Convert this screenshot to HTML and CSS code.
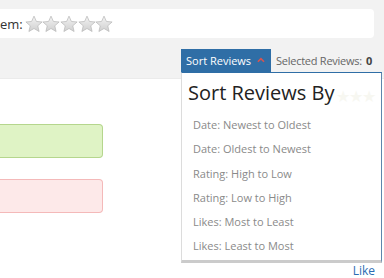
FILE: index.html
```html
<!DOCTYPE html>
<html lang="en">
<head>
  <meta charset="UTF-8">
  <meta name="viewport" content="width=device-width, initial-scale=1.0">
  <title>Reviews</title>
  <link rel="stylesheet" href="styles.css">
</head>
<body>
  <svg width="0" height="0" class="defs">
    <defs>
      <linearGradient id="starfill" x1="0" y1="0" x2="0" y2="1">
        <stop offset="0" stop-color="#f4f4f4"/>
        <stop offset="1" stop-color="#cfcfcf"/>
      </linearGradient>
      <symbol id="star" viewBox="0 0 24 24">
        <path d="M12 1.5l3.2 7.1 7.6.7-5.8 5.1 1.8 7.6L12 18l-6.8 4 1.8-7.6-5.8-5.1 7.6-.7z" fill="url(#starfill)" stroke="#b9b9b9" stroke-width="1"/>
      </symbol>
    </defs>
  </svg>

  <div class="topbar">
    <div class="rating-box">
      <span class="rating-label">em:</span>
      <span class="stars">
        <svg><use href="#star"/></svg>
        <svg><use href="#star"/></svg>
        <svg><use href="#star"/></svg>
        <svg><use href="#star"/></svg>
        <svg><use href="#star"/></svg>
      </span>
    </div>

    <div class="sort-row">
      <button class="sort-btn">Sort Reviews
        <svg class="caret" width="9" height="6" viewBox="0 0 9 6"><polyline points="1,5 4.5,1.5 8,5" fill="none" stroke="#d9534f" stroke-width="1.8"/></svg>
      </button>
      <span class="selected">Selected Reviews: <b>0</b></span>

      <div class="sort-menu">
        <h2>Sort Reviews By</h2>
        <span class="ghost-stars">★★★</span>
        <ul>
          <li>Date: Newest to Oldest</li>
          <li>Date: Oldest to Newest</li>
          <li>Rating: High to Low</li>
          <li>Rating: Low to High</li>
          <li>Likes: Most to Least</li>
          <li>Likes: Least to Most</li>
        </ul>
      </div>
    </div>
  </div>

  <div class="content">
    <div class="notice good"></div>
    <div class="notice bad"></div>
    <a class="like" href="#">Like</a>
  </div>
</body>
</html>
```

FILE: styles.css
```css
body {
  margin: 0;
  font-family: "Open Sans", Arial, sans-serif;
  background: #fff;
  overflow: hidden;
  width: 384px;
  height: 278px;
}
.defs {
  position: absolute;
}
.topbar {
  background: #f2f2f2;
  height: 79px;
  padding-top: 9px;
  box-sizing: border-box;
  border-bottom: 1px solid #ebebeb;
}
.rating-box {
  background: #fff;
  height: 29px;
  margin-right: 10px;
  border-radius: 0 4px 4px 0;
  display: flex;
  align-items: center;
}
.rating-label {
  font-size: 13px;
  color: #333;
}
.stars {
  display: flex;
  margin-left: 2px;
  margin-top: 1px;
}
.stars svg {
  width: 18px;
  height: 18px;
  margin-right: -0.4px;
}

/* sort toolbar */
.sort-row {
  position: relative;
  display: flex;
  justify-content: flex-end;
  align-items: stretch;
  height: 23px;
  margin-top: 11px;
  margin-right: 2px;
}
.sort-btn {
  background: #2f6ea6;
  color: #fff;
  border: none;
  font-family: inherit;
  font-size: 11px;
  white-space: nowrap;
  padding: 0 6px 0 5px;
  width: 90px;
  text-align: left;
  display: flex;
  align-items: center;
  gap: 6px;
}
.caret {
  margin-top: -1px;
}
.selected {
  width: 111px;
  box-sizing: border-box;
  padding-left: 5px;
  font-size: 11px;
  letter-spacing: -0.25px;
  color: #666;
  display: flex;
  align-items: center;
  white-space: nowrap;
}
.selected b {
  color: #444;
  margin-left: 4px;
}
.sort-menu {
  position: absolute;
  top: 100%;
  right: 0;
  width: 201px;
  height: 191px;
  box-sizing: border-box;
  background: #fff;
  border-top: 1px solid #2f6ea6;
  border-left: 1px solid #dcdcdc;
  border-right: 1px solid #5f86ad;
  border-bottom: 3px solid #cbcbcb;
  padding: 5px 0 0 6px;
}
.sort-menu h2 {
  margin: 0;
  font-size: 20px;
  font-weight: 400;
  color: #222;
  line-height: 30px;
}
.ghost-stars {
  position: absolute;
  top: 12px;
  right: 6px;
  font-size: 16px;
  letter-spacing: -1px;
  color: #f7f7f1;
}
.sort-menu ul {
  list-style: none;
  margin: 5px 0 0 5px;
  padding: 0;
}
.sort-menu li {
  font-size: 11px;
  color: #8a8a8a;
  line-height: 24.3px;
}

/* content */
.content {
  position: relative;
  height: 199px;
  padding-top: 45px;
  box-sizing: border-box;
}
.notice {
  width: 107px;
  height: 34px;
  box-sizing: border-box;
  margin-left: -4px;
  border-radius: 0 4px 4px 0;
  border: 1px solid;
  border-left: none;
}
.notice.good {
  background: #dff3c5;
  border-color: #b5d68d;
}
.notice.bad {
  margin-top: 21px;
  background: #fde9e9;
  border-color: #f4b9b9;
}
.like {
  position: absolute;
  right: 9px;
  bottom: 0;
  font-size: 12px;
  line-height: 14px;
  color: #2a6db3;
  text-decoration: none;
}
```
